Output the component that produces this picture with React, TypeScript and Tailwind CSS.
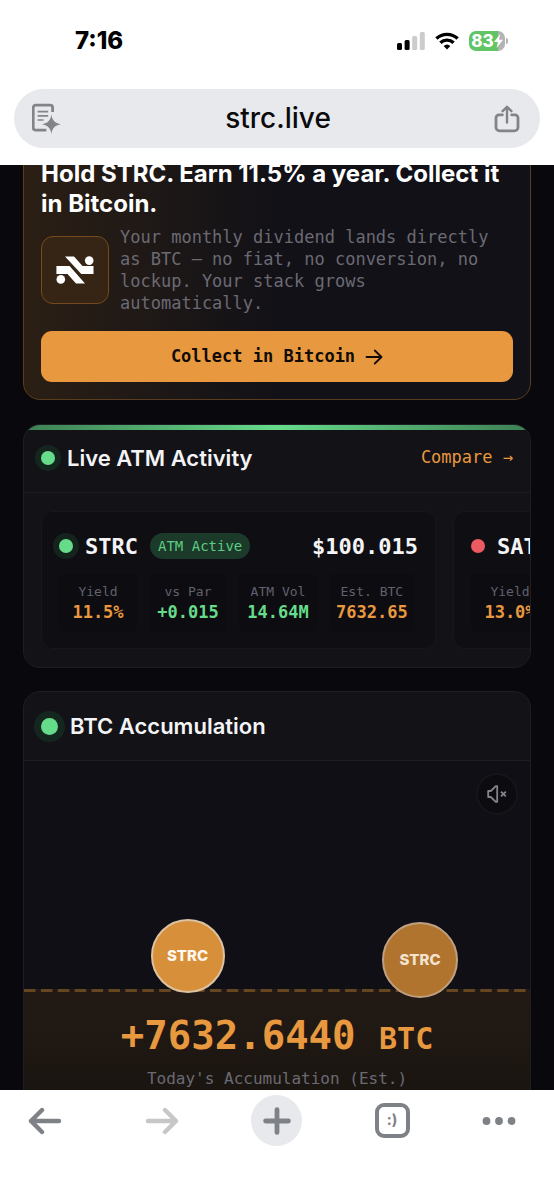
import React, { useState } from 'react';

const MONO = "font-['DejaVu_Sans_Mono','Liberation_Mono',monospace]";

interface Stat {
  label: string;
  value: string;
  tone: 'orange' | 'green';
}

interface Ticker {
  symbol: string;
  price: string;
  active: boolean;
  stats: Stat[];
}

const tickers: Ticker[] = [
  {
    symbol: 'STRC',
    price: '$100.015',
    active: true,
    stats: [
      { label: 'Yield', value: '11.5%', tone: 'orange' },
      { label: 'vs Par', value: '+0.015', tone: 'green' },
      { label: 'ATM Vol', value: '14.64M', tone: 'green' },
      { label: 'Est. BTC', value: '7632.65', tone: 'orange' },
    ],
  },
  {
    symbol: 'SATA',
    price: '',
    active: false,
    stats: [{ label: 'Yield', value: '13.0%', tone: 'orange' }],
  },
];

function StatusBar() {
  return (
    <div className="flex h-[82px] shrink-0 items-center justify-between pl-[75px] pr-[46px] text-black">
      <span className="text-2xl font-extrabold">7:16</span>
      <div className="flex items-center gap-[10px]">
        <svg width="28" height="18" viewBox="0 0 28 18" aria-hidden="true">
          <rect x="0" y="11" width="5" height="7" rx="1.5" fill="#000" />
          <rect x="7.6" y="8" width="5" height="10" rx="1.5" fill="#000" />
          <rect x="15.2" y="4" width="5" height="14" rx="1.5" fill="#ccc" />
          <rect x="22.8" y="0" width="5" height="18" rx="1.5" fill="#ccc" />
        </svg>
        <svg width="24" height="18" viewBox="0 0 24 18" fill="none" stroke="#000" strokeWidth="3.4" aria-hidden="true">
          <path d="M1.4 6.6a15.4 15.4 0 0 1 21.2 0" />
          <path d="M5.4 10.8a9.6 9.6 0 0 1 13.2 0" />
          <path d="M12 17.6l-3.4-3.5a5 5 0 0 1 6.8 0z" fill="#000" stroke="none" />
        </svg>
        <div className="flex items-center gap-[1px]">
          <div className="flex h-5 w-9 items-center justify-center rounded-[7px] bg-linear-to-r from-[#61c466] from-80% to-[#b3b3b3] to-80% text-white">
            <span className="text-[17px] leading-5 font-extrabold">83</span>
            <svg width="9" height="14" viewBox="0 0 9 14" fill="currentColor" aria-hidden="true">
              <path d="M6.2 0L0 8h3.9L2.6 14 9 5.8H5z" />
            </svg>
          </div>
          <span className="h-[6px] w-[2px] rounded-r bg-[#b3b3b3]" />
        </div>
      </div>
    </div>
  );
}

function AddressBar() {
  return (
    <div className="shrink-0 px-[14px] pt-[7px] pb-[17px]">
      <div className="flex h-[59px] items-center justify-between rounded-full bg-[#e8e9ed] pl-[18px] pr-5 text-[#828588]">
        <button type="button" aria-label="Page tools">
          <svg width="30" height="32" viewBox="0 0 30 32" fill="none" stroke="currentColor" strokeWidth="2.8">
            <path d="M20.6 9V4.6a2.4 2.4 0 0 0-2.4-2.4H3.6a2.4 2.4 0 0 0-2.4 2.4v20.2a2.4 2.4 0 0 0 2.4 2.4h10.8" />
            <path d="M5.6 8.6h10.6M5.6 12.8h10.6M5.6 17h6" strokeWidth="1.7" />
            <path d="M19.4 11.5c.8 5.8 3.2 8.6 9.6 9.8-6.4 1.2-8.8 4-9.6 9.8-.8-5.8-3.2-8.6-9.6-9.8 6.4-1.2 8.8-4 9.6-9.8z" fill="currentColor" stroke="none" />
          </svg>
        </button>
        <input
          aria-label="Address"
          className="h-10 min-w-0 flex-1 bg-transparent pb-[2px] text-center text-[28px] font-medium text-[#0b0b0c] outline-none"
          defaultValue="strc.live"
        />
        <button type="button" aria-label="Share">
          <svg width="26" height="28" viewBox="0 0 26 28" fill="none" stroke="currentColor" strokeWidth="2.8" strokeLinecap="round" strokeLinejoin="round">
            <path d="M8.4 9.8H5a3 3 0 0 0-3 3v9.4a3.6 3.6 0 0 0 3.6 3.6h14.8a3.6 3.6 0 0 0 3.6-3.6v-9.4a3 3 0 0 0-3-3h-3.4" />
            <path d="M13 17.6V2.4M8.6 6.2L13 1.8l4.4 4.4" strokeWidth="2.4" />
          </svg>
        </button>
      </div>
    </div>
  );
}

function PromoCard() {
  return (
    <section className="rounded-[17px] border border-[#5a3d1c] bg-linear-to-r from-[#2b1f14] to-[#121117] to-50% px-[17px] pt-10 pb-[17px]">
      <h2 className="text-2xl leading-[30px] font-bold text-white">
        Hold STRC. Earn 11.5% a year. Collect it in Bitcoin.
      </h2>
      <div className="mt-[7px] flex items-center gap-[11px]">
        <div className="flex size-[68px] shrink-0 items-center justify-center rounded-xl border border-[#754a1d] bg-[#362515]">
          <svg width="38" height="28" viewBox="0 0 38 28" fill="#fff" aria-hidden="true">
            <path d="M9 .5h9L26.5 10h11v8H25.3z" />
            <path d="M.4 10h13.2L29 27.6h-9L11.5 18H.4z" />
            <circle cx="33.2" cy="4.6" r="4.3" />
            <circle cx="4.8" cy="23.4" r="4.3" />
          </svg>
        </div>
        <p className={`${MONO} text-[17px] leading-[22px] text-[#6b6a73]`}>
          Your monthly dividend lands directly as BTC — no fiat, no conversion, no lockup. Your stack grows automatically.
        </p>
      </div>
      <button
        type="button"
        className={`${MONO} mt-[17px] flex h-[51px] w-full items-center justify-center gap-[10px] rounded-[11px] bg-[#e8983e] text-[17px] font-bold text-[#110b06]`}
      >
        Collect in Bitcoin
        <svg width="18" height="16" viewBox="0 0 18 16" fill="none" stroke="currentColor" strokeWidth="1.8" strokeLinecap="round" strokeLinejoin="round" aria-hidden="true">
          <path d="M1.5 8h15M9.8 1.5L16.5 8l-6.7 6.5" />
        </svg>
      </button>
    </section>
  );
}

function TickerCard({ symbol, price, active, stats }: Ticker) {
  return (
    <article className="w-[395px] shrink-0 rounded-xl border border-[#17171d] bg-[#0e0e13] px-[17px] pt-[21px] pb-4">
      <div className="flex h-[26px] items-center">
        <span className={active ? 'size-[14px] rounded-full bg-[#66dc8b] ring-6 ring-[#14241d]' : 'size-[14px] rounded-full bg-[#ee5a62]'} />
        <h3 className={`${MONO} ml-3 text-[22px] font-bold text-[#f4f4f6]`}>{symbol}</h3>
        {active && (
          <span className={`${MONO} ml-3 rounded-full bg-[#1c3a2a] px-2 text-sm leading-[26px] text-[#5ecb80]`}>ATM Active</span>
        )}
        <span className={`${MONO} ml-auto text-[22px] font-bold text-[#f4f4f6]`}>{price}</span>
      </div>
      <dl className="mt-[15px] flex gap-[12px]">
        {stats.map((stat) => (
          <div key={stat.label} className={`${MONO} flex h-[58px] min-w-[78px] flex-col items-center justify-center rounded-md bg-[#0c0c11] px-[7px]`}>
            <dt className="text-[13px] leading-[18px] text-[#62616b]">{stat.label}</dt>
            <dd className={stat.tone === 'green' ? 'text-[17px] leading-[22px] font-bold text-[#66dc8b]' : 'text-[17px] leading-[22px] font-bold text-[#e8983e]'}>
              {stat.value}
            </dd>
          </div>
        ))}
      </dl>
    </article>
  );
}

function LiveActivity() {
  return (
    <section className="mt-6 overflow-hidden rounded-[17px] border border-[#1d1d24] bg-[#121217]">
      <div className="h-[5px] bg-linear-to-r from-[#3d8054] via-[#66dc8b] to-[#3d8054]" />
      <header className="flex h-[63px] items-center border-b border-[#1d1d26] px-[17px] pb-[6px]">
        <span className="size-[14px] rounded-full bg-[#66dc8b] ring-6 ring-[#14271f]" />
        <h2 className="ml-3 text-[22px] font-semibold text-[#f4f4f6]">Live ATM Activity</h2>
        <a href="#compare" className={`${MONO} ml-auto text-[17px] text-[#e8983e]`}>
          Compare →
        </a>
      </header>
      <div className="flex gap-[17px] overflow-hidden px-[17px] py-[18px]">
        {tickers.map((ticker) => (
          <TickerCard key={ticker.symbol} {...ticker} />
        ))}
      </div>
    </section>
  );
}

function Accumulation() {
  const [muted, setMuted] = useState(true);

  return (
    <section className="mt-[23px] overflow-hidden rounded-[17px] border border-[#1d1d24] bg-[#121217]">
      <header className="flex h-[69px] items-center border-b border-[#1d1d24] px-[17px]">
        <span className="size-[17px] rounded-full bg-[#66dc8b] ring-7 ring-[#14271f]" />
        <h2 className="ml-3 text-[22px] font-semibold text-[#f4f4f6]">BTC Accumulation</h2>
      </header>
      <div className="relative h-[228px] bg-[#0f0f15]">
        <button
          type="button"
          aria-label="Toggle sound"
          aria-pressed={muted}
          onClick={() => setMuted(!muted)}
          className="absolute top-3 right-3 flex size-[42px] items-center justify-center rounded-full border-2 border-[#15151a] bg-[#0b0b10]"
        >
          <svg width="20" height="18" viewBox="0 0 20 18" fill="none" stroke="#85848c" strokeWidth="1.8" strokeLinejoin="round">
            <path d="M1.2 6h2.6l5-4.8h1.4v15.6H8.8L3.8 12H1.2z" />
            {muted && <path d="M14 6.6l4.8 4.8M18.8 6.6L14 11.4" />}
          </svg>
        </button>
        <div className="absolute top-[158px] left-1/4 z-10 flex size-[74px] items-center justify-center rounded-full border-2 border-[#dcc3a4] bg-[#d88f39] text-[15px] font-extrabold text-[#fff8ee]">
          STRC
        </div>
        <div className="absolute top-[161px] right-[72px] z-10 flex size-[76px] items-center justify-center rounded-full border-2 border-[#bfa080] bg-[#b1742e] text-[15px] font-extrabold text-[#f3e3cf]">
          STRC
        </div>
      </div>
      <div className="bg-linear-to-b from-[#231a15] to-[#17130f] pb-10 text-center">
        <svg className="block h-[3px] w-full" aria-hidden="true">
          <line x1="0" y1="1.5" x2="100%" y2="1.5" stroke="#664521" strokeWidth="3" strokeDasharray="11.5 5.4" />
        </svg>
        <p className={`${MONO} mt-[22px] text-[39px] leading-[44px] font-bold text-[#e8983e]`}>
          +7632.6440 <span className="text-[30px]">BTC</span>
        </p>
        <p className={`${MONO} mt-[6px] text-base leading-6 text-[#6b6a73]`}>Today's Accumulation (Est.)</p>
      </div>
    </section>
  );
}

function BrowserToolbar() {
  return (
    <nav className="flex h-[110px] shrink-0 items-start justify-between bg-white pt-[5px] pr-[38px] pl-7 text-[#7e8287]">
      <button type="button" aria-label="Back" className="flex h-[51px] w-11 items-center">
        <svg width="34" height="28" viewBox="0 0 34 28" fill="none" stroke="currentColor" strokeWidth="4.4" strokeLinecap="round" strokeLinejoin="round">
          <path d="M31 14H3M14 3L3 14l11 11" />
        </svg>
      </button>
      <button type="button" aria-label="Forward" className="flex h-[51px] items-center text-[#c7c7c8]">
        <svg width="34" height="28" viewBox="0 0 34 28" fill="none" stroke="currentColor" strokeWidth="4.4" strokeLinecap="round" strokeLinejoin="round">
          <path d="M3 14h28M20 3l11 11-11 11" />
        </svg>
      </button>
      <button type="button" aria-label="New tab" className="flex size-[51px] items-center justify-center rounded-full bg-[#e8e9ed]">
        <svg width="28" height="28" viewBox="0 0 28 28" fill="none" stroke="currentColor" strokeWidth="4.8" strokeLinecap="round">
          <path d="M14 2.6v22.8M2.6 14h22.8" />
        </svg>
      </button>
      <button type="button" aria-label="Tabs" className="flex h-[51px] items-center">
        <span className="flex size-[35px] items-center justify-center rounded-[9px] border-4 border-current text-[15px] font-bold">:)</span>
      </button>
      <button type="button" aria-label="More" className="flex h-[51px] items-center">
        <svg width="34" height="8" viewBox="0 0 34 8" fill="currentColor">
          <circle cx="4.5" cy="4" r="3.9" />
          <circle cx="17" cy="4" r="3.9" />
          <circle cx="29.5" cy="4" r="3.9" />
        </svg>
      </button>
    </nav>
  );
}

export default function App() {
  return (
    <div className="flex h-screen flex-col overflow-hidden bg-white font-['Inter','Liberation_Sans',sans-serif]">
      <StatusBar />
      <AddressBar />
      <main className="min-h-0 flex-1 overflow-hidden bg-[#09090d]">
        {/* page is scrolled partway into the promo card */}
        <div className="-mt-[47px] px-[23px]">
          <PromoCard />
          <LiveActivity />
          <Accumulation />
        </div>
      </main>
      <BrowserToolbar />
    </div>
  );
}
